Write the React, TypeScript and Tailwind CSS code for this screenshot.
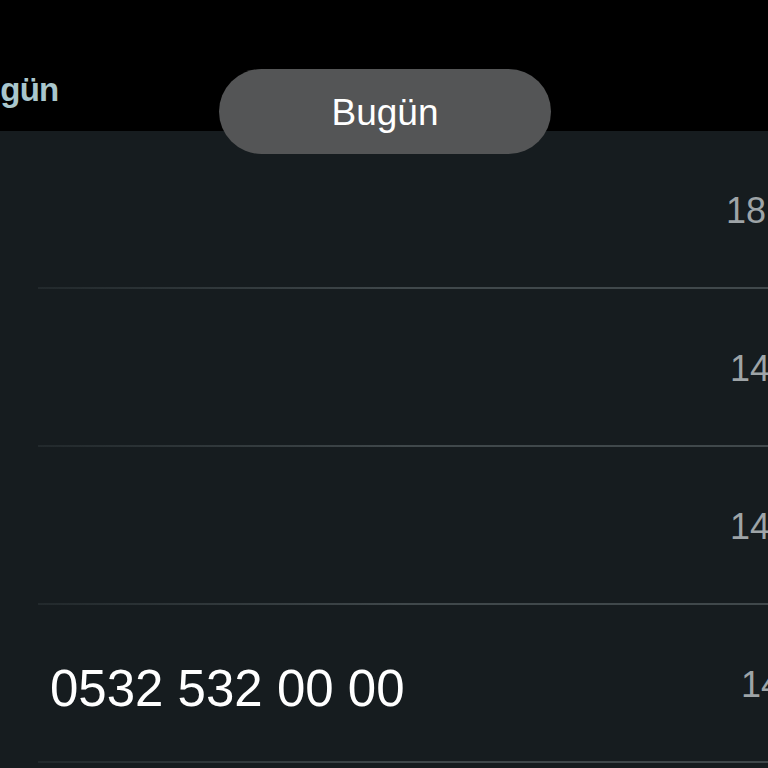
import React from 'react';

type Row = { name: string; time: string; shift: string };

const rows: Row[] = [
  { name: '', time: '18:42', shift: '-mr-[48px]' },
  { name: '', time: '14:27', shift: '-mr-[52px]' },
  { name: '', time: '14:16', shift: '-mr-[52px]' },
  { name: '0532 532 00 00', time: '14:03', shift: '-mr-[63px]' },
];

export default function App() {
  return (
    <div
      className="relative w-[768px] h-[768px] overflow-hidden bg-[#161c1f]"
      style={{ fontFamily: '"Liberation Sans", Arial, sans-serif' }}
    >
      {/* header */}
      <div className="h-[131px] bg-black flex items-center overflow-hidden">
        <span className="-ml-[42px] mt-[48px] text-[33px] font-semibold text-[#a9c6cc] tracking-tight">
          Bugün
        </span>
      </div>

      {/* list */}
      <div className="flex flex-col">
        {rows.map((r, i) => (
          <div key={i} className="relative h-[158px] flex items-center justify-between pl-[50px]">
            <span className="mt-[8px] text-[51px] text-white leading-none">{r.name}</span>
            <span className={`shrink-0 mt-[2px] text-[36px] text-[#9ea4a7] leading-none ${r.shift}`}>{r.time}</span>
            <div className="absolute left-[38px] right-0 bottom-0 h-[2px] bg-gradient-to-r from-[#22292c] via-[#40484b] to-[#40484b]" />
          </div>
        ))}
      </div>

      {/* toast */}
      <div className="absolute left-[219px] top-[69px] w-[332px] h-[85px] rounded-full bg-[#545556] flex items-center justify-center">
        <span className="mt-[3px] text-[37px] text-white">Bugün</span>
      </div>
    </div>
  );
}
